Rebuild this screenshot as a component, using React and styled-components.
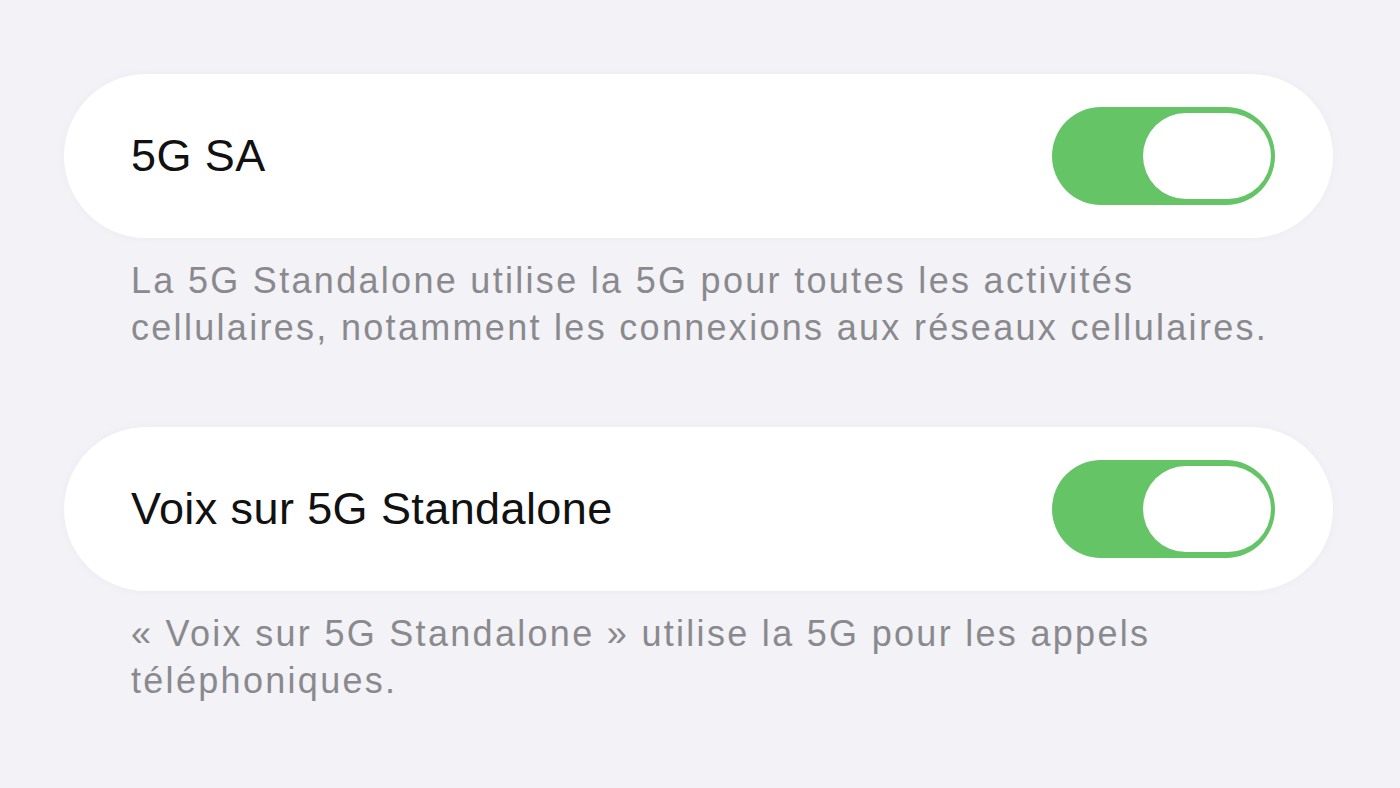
import React from "react";
import styled, { createGlobalStyle } from "styled-components";

const GlobalStyle = createGlobalStyle`
  html, body {
    margin: 0;
    padding: 0;
    background: #f2f2f7;
  }
  body {
    font-family: "Liberation Sans", Arial, sans-serif;
    -webkit-font-smoothing: antialiased;
  }
`;

const Page = styled.div`
  width: 1400px;
  height: 788px;
  box-sizing: border-box;
  padding: 74px 67px 0 64px;
  background: #f2f2f7;
  overflow: hidden;
`;

const Section = styled.section`
  display: flex;
  flex-direction: column;
  margin-bottom: ${props => props.gap || 0}px;
`;

const Card = styled.div`
  display: flex;
  align-items: center;
  justify-content: space-between;
  height: 164px;
  padding: 0 58px 0 67px;
  background: #fff;
  border-radius: 82px;
  box-shadow: 0 0 6px rgba(230, 230, 238, 0.6);
`;

const Label = styled.span`
  font-size: 45px;
  color: #111;
  letter-spacing: 0.4px;
`;

const Switch = styled.div`
  display: flex;
  justify-content: ${props => (props.on ? "flex-end" : "flex-start")};
  align-items: center;
  box-sizing: border-box;
  width: 223px;
  height: 98px;
  padding: 0 4px;
  border-radius: 49px;
  background: ${props => (props.on ? "#65c466" : "#e9e9eb")};
`;

const Thumb = styled.div`
  width: 128px;
  height: 86px;
  border-radius: 43px;
  background: #fff;
`;

const Footer = styled.p`
  width: 1160px;
  margin: 19px 0 0 67px;
  font-size: 36px;
  line-height: 47px;
  color: #8a8a8e;
  letter-spacing: 2.3px;
`;

const rows = [
  {
    label: "5G SA",
    note:
      "La 5G Standalone utilise la 5G pour toutes les activités cellulaires, notamment les connexions aux réseaux cellulaires.",
  },
  {
    label: "Voix sur 5G Standalone",
    note:
      "« Voix sur 5G Standalone » utilise la 5G pour les appels téléphoniques.",
  },
];

export default function App() {
  return (
    <>
      <GlobalStyle />
      <Page>
        {rows.map((row, idx) => (
          <Section key={idx} gap={idx === 0 ? 76 : 0}>
            <Card>
              <Label>{row.label}</Label>
              <Switch on>
                <Thumb />
              </Switch>
            </Card>
            <Footer>{row.note}</Footer>
          </Section>
        ))}
      </Page>
    </>
  );
}
